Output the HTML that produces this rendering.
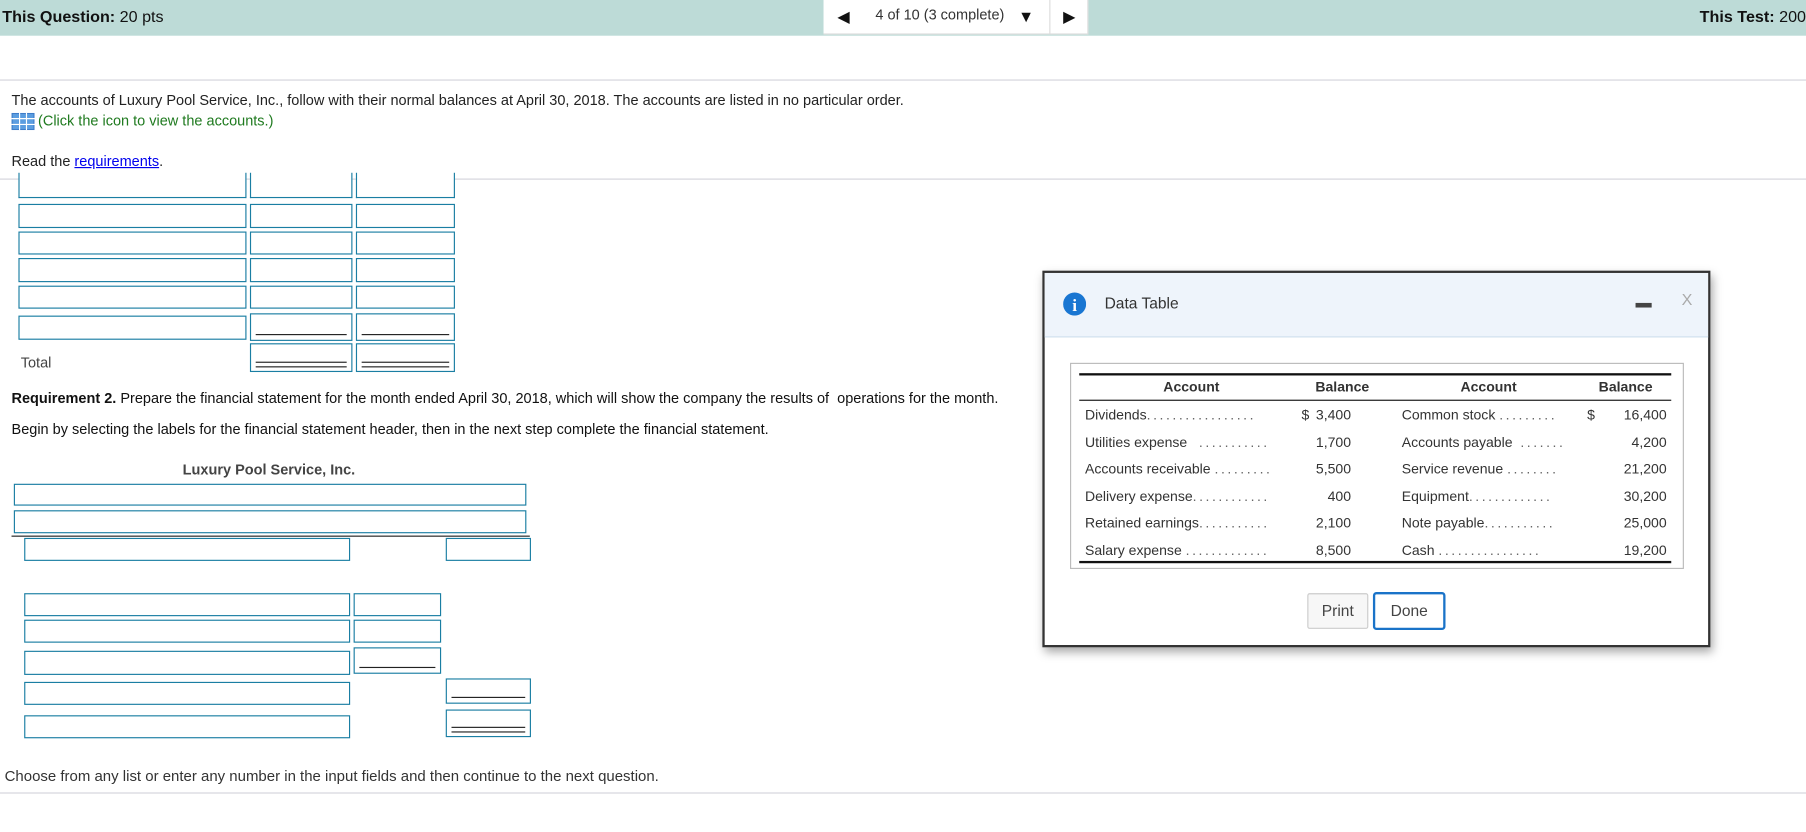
<!DOCTYPE html>
<html><head><meta charset="utf-8"><style>
*{margin:0;padding:0;box-sizing:border-box}
html,body{width:1806px;height:831px;overflow:hidden;background:#fff}
#w{position:absolute;left:0;top:0;width:1568px;height:722px;transform:scale(1.15179);transform-origin:0 0;font-family:"Liberation Sans",Arial,sans-serif;font-size:12.6px;color:#222}
.a{position:absolute;white-space:nowrap}
.i{position:absolute;border:1px solid #1a7ea3;background:#fff}
.u::after{content:"";position:absolute;left:4px;right:4px;bottom:4px;border-top:1px solid #222}
.d::after{content:"";position:absolute;left:4px;right:4px;bottom:3px;height:3px;border-top:1px solid #222;border-bottom:1px solid #222}
.hl{position:absolute;left:0;width:1568px;height:1px;background:#d4d4dc}
.t{position:absolute;white-space:nowrap;font-size:12.2px;color:#333}
.r{text-align:right}
.dt{color:#666;letter-spacing:2.2px}
</style></head><body><div id="w">
<div class="a" style="left:0;top:0;width:1568px;height:31px;background:#bddbd7"></div>
<div class="a" style="left:2px;top:6px;font-size:14px;color:#111"><b>This Question:</b> 20 pts</div>
<div class="a" style="right:0;top:6px;font-size:14px;color:#111"><b>This Test:</b> 200</div>
<div class="a" style="left:715px;top:0;width:230px;height:30px;background:#fff;border-right:1px solid #ddd;border-bottom:1px solid #ddd"></div>
<div class="a" style="left:911px;top:0;width:1px;height:30px;background:#ddd"></div>
<div class="a" style="left:727px;top:6px;font-size:14px;color:#111">◀</div>
<div class="a" style="left:760px;top:6px;font-size:12.6px;color:#333">4 of 10 (3 complete)</div>
<div class="a" style="left:884px;top:6px;font-size:14px;color:#111">▼</div>
<div class="a" style="left:923px;top:6px;font-size:14px;color:#111">▶</div>
<div class="hl" style="top:69px"></div>
<div class="a" style="left:10px;top:80px">The accounts of Luxury Pool Service, Inc., follow with their normal balances at April 30, 2018. The accounts are listed in no particular order.</div>
<svg class="a" style="left:10px;top:98px" width="20" height="15" viewBox="0 0 20 15"><rect x="0.5" y="0.5" width="19" height="14" fill="#5b9de0" stroke="#3d7cc9"/><g stroke="#fff" stroke-width="1"><line x1="0" y1="5" x2="20" y2="5"/><line x1="0" y1="10" x2="20" y2="10"/><line x1="7" y1="0" x2="7" y2="15"/><line x1="13" y1="0" x2="13" y2="15"/></g></svg>
<div class="a" style="left:33px;top:98px;color:#1f7a1f">(Click the icon to view the accounts.)</div>
<div class="a" style="left:10px;top:133px">Read the <span style="color:#0000ee;text-decoration:underline">requirements</span>.</div>
<div class="hl" style="top:155px"></div>
<div class="i" style="left:16px;top:150px;width:198px;height:22px;border-top:none"></div><div class="i" style="left:217px;top:150px;width:89px;height:22px;border-top:none"></div><div class="i" style="left:309px;top:150px;width:86px;height:22px;border-top:none"></div>
<div class="i" style="left:16px;top:177px;width:198px;height:21px"></div><div class="i" style="left:217px;top:177px;width:89px;height:21px"></div><div class="i" style="left:309px;top:177px;width:86px;height:21px"></div>
<div class="i" style="left:16px;top:201px;width:198px;height:20px"></div><div class="i" style="left:217px;top:201px;width:89px;height:20px"></div><div class="i" style="left:309px;top:201px;width:86px;height:20px"></div>
<div class="i" style="left:16px;top:224px;width:198px;height:21px"></div><div class="i" style="left:217px;top:224px;width:89px;height:21px"></div><div class="i" style="left:309px;top:224px;width:86px;height:21px"></div>
<div class="i" style="left:16px;top:248px;width:198px;height:20px"></div><div class="i" style="left:217px;top:248px;width:89px;height:20px"></div><div class="i" style="left:309px;top:248px;width:86px;height:20px"></div>
<div class="i" style="left:16px;top:274px;width:198px;height:21px"></div><div class="i u" style="left:217px;top:272px;width:89px;height:24px"></div><div class="i u" style="left:309px;top:272px;width:86px;height:24px"></div>
<div class="a" style="left:18px;top:308px;color:#444">Total</div>
<div class="i d" style="left:217px;top:298px;width:89px;height:25px"></div><div class="i d" style="left:309px;top:298px;width:86px;height:25px"></div>
<div class="a" style="left:10px;top:339px;color:#111"><b>Requirement 2.</b> Prepare the financial statement for the month ended April 30, 2018, which will show the company the results of &nbsp;operations for the month.</div>
<div class="a" style="left:10px;top:366px;color:#111">Begin by selecting the labels for the financial statement header, then in the next step complete the financial statement.</div>
<div class="a" style="left:0;width:467px;text-align:center;top:401px;font-weight:bold;color:#444">Luxury Pool Service, Inc.</div>
<div class="i" style="left:12px;top:420px;width:445px;height:19px"></div>
<div class="i" style="left:12px;top:443px;width:445px;height:20px"></div>
<div class="a" style="left:10px;top:465px;width:450px;height:1px;background:#222"></div>
<div class="i" style="left:21px;top:467px;width:283px;height:20px"></div><div class="i" style="left:387px;top:467px;width:74px;height:20px"></div>
<div class="i" style="left:21px;top:515px;width:283px;height:20px"></div><div class="i" style="left:307px;top:515px;width:76px;height:20px"></div>
<div class="i" style="left:21px;top:538px;width:283px;height:20px"></div><div class="i" style="left:307px;top:538px;width:76px;height:20px"></div>
<div class="i" style="left:21px;top:565px;width:283px;height:21px"></div><div class="i u" style="left:307px;top:562px;width:76px;height:23px"></div>
<div class="i" style="left:21px;top:592px;width:283px;height:20px"></div><div class="i u" style="left:387px;top:589px;width:74px;height:22px"></div>
<div class="i" style="left:21px;top:621px;width:283px;height:20px"></div><div class="i d" style="left:387px;top:616px;width:74px;height:24px"></div>
<div class="a" style="left:4px;top:666px;color:#333;font-size:13px">Choose from any list or enter any number in the input fields and then continue to the next question.</div>
<div class="hl" style="top:688px"></div>

<div class="a" style="left:905px;top:235px;width:580px;height:327px;border:2px solid #333;background:#fff;box-shadow:2px 4px 8px rgba(0,0,0,.35)"></div>
<div class="a" style="left:907px;top:237px;width:576px;height:56px;background:#eef4fb;border-bottom:1px solid #cfe0ee"></div>
<svg class="a" style="left:923px;top:254px" width="20" height="20" viewBox="0 0 20 20"><circle cx="10" cy="10" r="10" fill="#1976d2"/><text x="10" y="16" text-anchor="middle" font-family="Liberation Serif,serif" font-weight="bold" font-size="15" fill="#fff">i</text></svg>
<div class="a" style="left:959px;top:256px;font-size:13.5px;color:#333">Data Table</div>
<div class="a" style="left:1420px;top:263px;width:14px;height:4px;background:#444"></div>
<div class="a" style="left:1460px;top:252px;font-size:14px;color:#aaa">X</div>
<div class="a" style="left:929px;top:315px;width:533px;height:179px;border:1px solid #bbb"></div>
<div class="a" style="left:937px;top:324px;width:514px;height:2px;background:#111"></div>
<div class="a" style="left:937px;top:347px;width:514px;height:1px;background:#111"></div>
<div class="a" style="left:937px;top:487px;width:514px;height:2px;background:#111"></div>
<div class="t" style="left:1010px;top:329px;font-weight:bold">Account</div>
<div class="t" style="left:1142px;top:329px;font-weight:bold">Balance</div>
<div class="t" style="left:1268px;top:329px;font-weight:bold">Account</div>
<div class="t" style="left:1388px;top:329px;font-weight:bold">Balance</div>

<div class="t" style="left:942px;top:353px">Dividends<span class="dt">.................</span></div>
<div class="t" style="left:942px;top:377px">Utilities expense &nbsp;&nbsp;<span class="dt">...........</span></div>
<div class="t" style="left:942px;top:400px">Accounts receivable <span class="dt">.........</span></div>
<div class="t" style="left:942px;top:424px">Delivery expense<span class="dt">............</span></div>
<div class="t" style="left:942px;top:447px">Retained earnings<span class="dt">...........</span></div>
<div class="t" style="left:942px;top:471px">Salary expense <span class="dt">.............</span></div>
<div class="t" style="left:1130px;top:353px">$</div>
<div class="t r" style="left:1113px;width:60px;top:353px">3,400</div>
<div class="t r" style="left:1113px;width:60px;top:377px">1,700</div>
<div class="t r" style="left:1113px;width:60px;top:400px">5,500</div>
<div class="t r" style="left:1113px;width:60px;top:424px">400</div>
<div class="t r" style="left:1113px;width:60px;top:447px">2,100</div>
<div class="t r" style="left:1113px;width:60px;top:471px">8,500</div>
<div class="t" style="left:1217px;top:353px">Common stock <span class="dt">.........</span></div>
<div class="t" style="left:1217px;top:377px">Accounts payable &nbsp;<span class="dt">.......</span></div>
<div class="t" style="left:1217px;top:400px">Service revenue <span class="dt">........</span></div>
<div class="t" style="left:1217px;top:424px">Equipment<span class="dt">.............</span></div>
<div class="t" style="left:1217px;top:447px">Note payable<span class="dt">...........</span></div>
<div class="t" style="left:1217px;top:471px">Cash <span class="dt">................</span></div>
<div class="t" style="left:1378px;top:353px">$</div>
<div class="t r" style="left:1387px;width:60px;top:353px">16,400</div>
<div class="t r" style="left:1387px;width:60px;top:377px">4,200</div>
<div class="t r" style="left:1387px;width:60px;top:400px">21,200</div>
<div class="t r" style="left:1387px;width:60px;top:424px">30,200</div>
<div class="t r" style="left:1387px;width:60px;top:447px">25,000</div>
<div class="t r" style="left:1387px;width:60px;top:471px">19,200</div>

<div class="a" style="left:1135px;top:515px;width:53px;height:31px;border:1px solid #ccc;border-radius:2px;background:#f7f7f7;text-align:center;line-height:29px;font-size:13.5px;color:#444">Print</div>
<div class="a" style="left:1192px;top:514px;width:63px;height:33px;border:2px solid #1a73c8;border-radius:3px;background:#fff;text-align:center;line-height:29px;font-size:13.5px;color:#444">Done</div>
</div></body></html>
